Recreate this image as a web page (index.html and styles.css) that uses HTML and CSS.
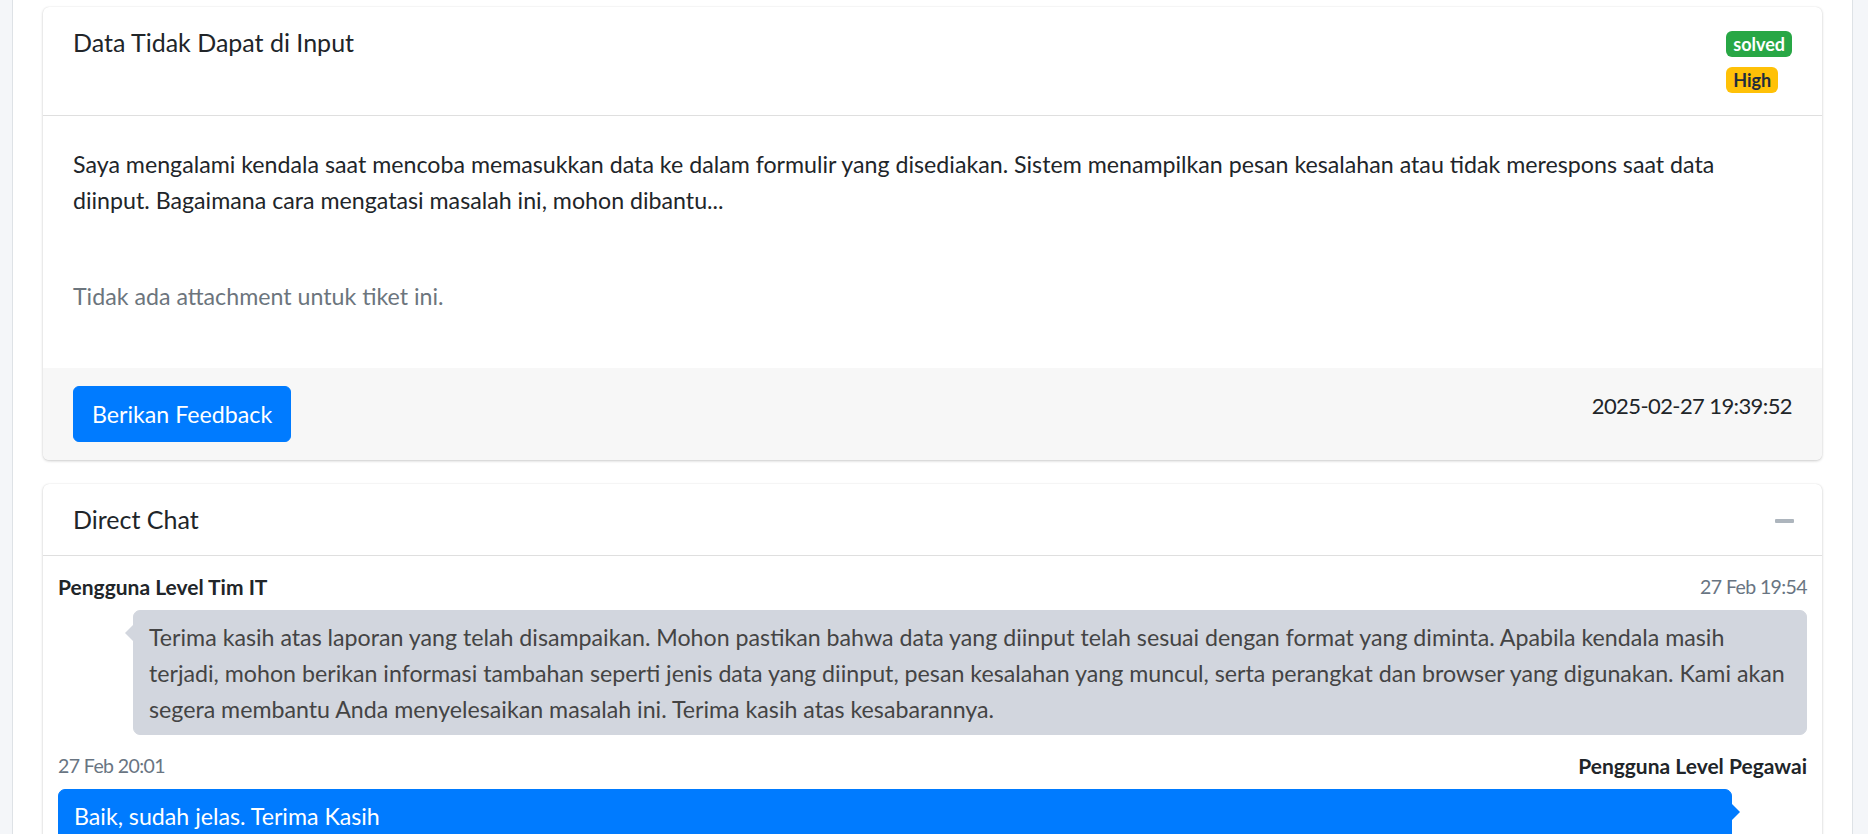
FILE: index.html
```html
<!DOCTYPE html>
<html lang="id">
<head>
<meta charset="utf-8">
<title>Detail Tiket</title>
<link rel="stylesheet" href="styles.css">
</head>
<body>
<div class="panel">
  <div class="card">
    <div class="card-header header-ticket">
      <h3 class="card-title">Data Tidak Dapat di Input</h3>
      <div class="badges">
        <span class="badge badge-success">solved</span>
        <span class="badge badge-warning">High</span>
      </div>
    </div>
    <div class="card-body">
      <p class="desc">Saya mengalami kendala saat mencoba memasukkan data ke dalam formulir yang disediakan. Sistem menampilkan pesan kesalahan atau tidak merespons saat data diinput. Bagaimana cara mengatasi masalah ini, mohon dibantu...</p>
      <p class="muted">Tidak ada attachment untuk tiket ini.</p>
    </div>
    <div class="card-footer">
      <button class="btn btn-primary" type="button">Berikan Feedback</button>
      <span class="date">2025-02-27 19:39:52</span>
    </div>
  </div>

  <div class="card">
    <div class="card-header">
      <h3 class="card-title">Direct Chat</h3>
      <button class="btn-tool" type="button" aria-label="Collapse">
        <svg width="19" height="4" viewBox="0 0 19 4"><rect x="0" y="0" width="19" height="4" rx="1" fill="#adb5bd"/></svg>
      </button>
    </div>
    <div class="chat">
      <div class="msg">
        <div class="infos">
          <span class="name">Pengguna Level Tim IT</span>
          <span class="time">27 Feb 19:54</span>
        </div>
        <div class="bubble">Terima kasih atas laporan yang telah disampaikan. Mohon pastikan bahwa data yang diinput telah sesuai dengan format yang diminta. Apabila kendala masih terjadi, mohon berikan informasi tambahan seperti jenis data yang diinput, pesan kesalahan yang muncul, serta perangkat dan browser yang digunakan. Kami akan segera membantu Anda menyelesaikan masalah ini. Terima kasih atas kesabarannya.</div>
      </div>
      <div class="msg msg-right">
        <div class="infos">
          <span class="time">27 Feb 20:01</span>
          <span class="name">Pengguna Level Pegawai</span>
        </div>
        <div class="bubble bubble-primary">Baik, sudah jelas. Terima Kasih</div>
      </div>
    </div>
  </div>
</div>
</body>
</html>
```

FILE: styles.css
```css
html, body {
  margin: 0;
  padding: 0;
}

body {
  background: #f4f6f9;
  font-family: "Lato", "Source Sans Pro", sans-serif;
  font-size: 23.2px;
  line-height: 36px;
  color: #212529;
  height: 834px;
  overflow: hidden;
}

.panel {
  margin-left: 12px;
  width: 1841px;
  box-sizing: border-box;
  min-height: 834px;
  background: #fff;
  border-left: 1px solid #dee2e6;
  border-right: 1px solid #dee2e6;
  padding: 7px 30px 0;
}

.card {
  background: #fff;
  border-radius: 6px;
  box-shadow: 0 0 1px rgba(0, 0, 0, .125), 0 1px 3px rgba(0, 0, 0, .2);
  margin-bottom: 24px;
  overflow: hidden;
}

.card-header {
  display: flex;
  justify-content: space-between;
  align-items: flex-start;
  padding: 18px 30px;
  border-bottom: 1px solid rgba(0, 0, 0, .125);
}

.header-ticket {
  padding-bottom: 22px;
}

.card-title {
  margin: -1px 0 0;
  font-size: 25px;
  font-weight: 400;
  line-height: 36px;
  color: #212529;
}

.badges {
  margin-top: 6px;
  display: flex;
  flex-direction: column;
  align-items: flex-start;
  gap: 10px;
}

.badge {
  display: inline-block;
  font-size: 18px;
  font-weight: 700;
  line-height: 18px;
  padding: 4px 7px;
  border-radius: 6px;
}

.badge-success {
  background: #28a745;
  color: #fff;
}

.badge-warning {
  background: #ffc107;
  color: #1f2d3d;
}

.card-body {
  padding: 30px;
}

.desc {
  margin: 0;
}

.muted {
  margin: 60px 0 24px;
  color: #6c757d;
}

.card-footer {
  background: #f7f7f7;
  padding: 18px 30px;
  display: flex;
  justify-content: space-between;
  align-items: flex-start;
}

.btn {
  font-family: inherit;
  font-size: 23.2px;
  line-height: 36px;
  padding: 9px 18px;
  border-radius: 6px;
  border: 1px solid #007bff;
  background: #007bff;
  color: #fff;
  cursor: pointer;
}

.date {
  padding-top: 2px;
  font-size: 22px;
  letter-spacing: -0.6px;
  color: #212529;
}

.btn-tool {
  background: transparent;
  border: 0;
  padding: 0;
  margin: 17px -2px 0 0;
  height: 4px;
  display: flex;
}

.chat {
  padding: 15px;
}

.msg {
  margin-bottom: 15px;
}

.infos {
  display: flex;
  justify-content: space-between;
  font-size: 21px;
  line-height: 31.5px;
}

.name {
  font-weight: 700;
  color: #212529;
}

.time {
  font-size: 19.5px;
  letter-spacing: -0.6px;
  color: #697582;
}

.bubble {
  position: relative;
  margin: 7.5px 0 0 75px;
  padding: 7.5px 15px;
  background: #d2d6de;
  border: 1px solid #d2d6de;
  border-radius: 7px;
  color: #444;
}

.bubble::before {
  content: "";
  position: absolute;
  right: 100%;
  top: 22px;
  margin-top: -9px;
  border: 9px solid transparent;
  border-right-color: #d2d6de;
  border-left-width: 0;
}

.msg-right .bubble {
  margin: 7.5px 75px 0 0;
}

.bubble-primary {
  background: #007bff;
  border-color: #007bff;
  color: #fff;
}

.msg-right .bubble::before {
  right: auto;
  left: 100%;
  border-right-color: transparent;
  border-left-color: #007bff;
  border-right-width: 0;
  border-left-width: 9px;
}
```
